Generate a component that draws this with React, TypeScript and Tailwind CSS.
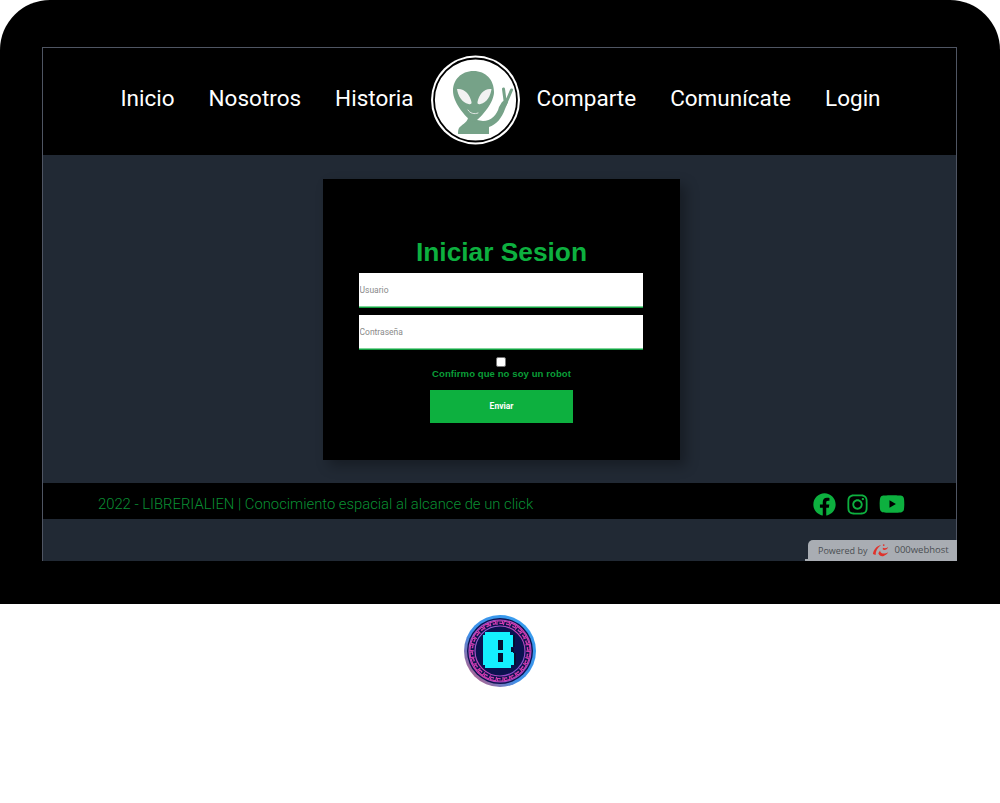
import { FaFacebook, FaInstagram, FaYoutube } from "react-icons/fa";

const navLeft = ["Inicio", "Nosotros", "Historia"];
const navRight = ["Comparte", "Comunícate", "Login"];
const keyAngles = Array.from({ length: 26 }, (_, i) => (i * 360) / 26);

const AlienLogo = () => (
  <svg viewBox="0 0 90 90" className="w-[90px] h-[90px] shrink-0">
    <circle cx="44.500" cy="45" r="44.500" fill="#fff" />
    <circle cx="44.500" cy="45" r="41.500" fill="#fff" stroke="#000" strokeWidth="1.800" />
    <path
      d="M37 63C36 68 30 70 28 73C27 75 27 77 27 79L58 79L58 72C65 70 71 63 74 54L77 47L75 44L71 47L68 52C66 60 60 66 52 66C50 66 48 65 46 65Z"
      fill="#76a288"
    />
    <path d="M74.500 49L72.500 34M74.500 49L80.500 35" stroke="#76a288" strokeWidth="3" strokeLinecap="round" />
    <path d="M42.500 16C55 16 63 25 63 37C63 47 52 60 46 65C44 67 41 67 39 65C33 60 22 47 22 36C22 25 30 16 42.500 16Z" fill="#76a288" />
    <path d="M26 34C33 33 39 39 40.500 47C40.800 49 39.500 49.500 37.500 49C31 47.500 27 41 26 34Z" fill="#f2f2f2" />
    <path d="M60.500 34C53.500 33 48 39 46.500 47C46.200 49 47.500 49.500 49.500 49C56 47.500 59.500 41 60.500 34Z" fill="#f2f2f2" />
    <path d="M37 55C39 58.500 43.500 59.500 47 58" fill="none" stroke="#ededed" strokeWidth="0.900" strokeLinecap="round" />
  </svg>
);

const WebhostMark = () => (
  <svg viewBox="0 0 20 16" className="w-[18px] h-[15px]">
    <path d="M1 12C2 7 5 3 10 2 6 5 4 9 4 13z" fill="#e0322b" />
    <path d="M7 11c1 3 4 4 6 3 2-.5 4-2 5-4-2 1-5 2-7 1-1-.5-2-1-2-3z" fill="#e0322b" />
    <path d="M12 5c2 1 4 .5 6-1-1 3-4 4-6 3z" fill="#e0322b" />
    <circle cx="13" cy="2" r="1" fill="#e0322b" />
  </svg>
);

const BadgeLogo = () => (
  <svg viewBox="0 0 72 72" className="w-[72px] h-[72px]">
    <defs>
      <linearGradient id="ring" x1="1" y1="0" x2="0" y2="1">
        <stop offset="0" stopColor="#35a0f0" />
        <stop offset="0.6" stopColor="#3f8fe8" />
        <stop offset="1" stopColor="#e0506a" />
      </linearGradient>
      <linearGradient id="keys" x1="0" y1="0" x2="1" y2="1">
        <stop offset="0" stopColor="#7c6be0" />
        <stop offset="0.5" stopColor="#d13db0" />
        <stop offset="1" stopColor="#6c55d8" />
      </linearGradient>
    </defs>
    <circle cx="36" cy="36" r="36" fill="url(#ring)" />
    <circle cx="36" cy="36" r="33" fill="#0b1250" />
    <circle cx="36" cy="36" r="31" fill="none" stroke="url(#keys)" strokeWidth="1.200" />
    <circle cx="36" cy="36" r="25" fill="none" stroke="url(#keys)" strokeWidth="1.200" />
    {keyAngles.map((a) => (
      <path
        key={a}
        d="M33 10V6H38.500V8.500H36V7.500"
        transform={`rotate(${a} 36 36)`}
        fill="none"
        stroke="#d13db0"
        strokeWidth="1.200"
      />
    ))}
    <path d="M21 17H46V20H49V32H47V35H49V38H50V50H47V53H21V50H19V20H21Z" fill="#14f0ff" />
    <path d="M49 20H51V32H49ZM47 33H50V37H47ZM50 38H52V50H50Z" fill="#061030" />
    <path d="M34 25H39V35H34ZM34 38H39V47H34Z" fill="#061030" />
  </svg>
);

export default function App() {
  return (
    <div className="w-[1000px] h-[803px] bg-white flex flex-col items-center overflow-hidden font-['Liberation_Sans',sans-serif]">
      <div className="w-full h-[604px] bg-black rounded-t-[50px] pt-[47px] px-[42px]">
        <div className="relative w-[915px] h-[514px] bg-[#212934] border-x border-t border-[#4f5563] flex flex-col">
          <header className="h-[107px] bg-black flex items-center justify-center pl-[2px] text-white text-[22.500px] font-['Roboto',sans-serif]">
            <nav className="flex items-center gap-[34px] mb-[5px]">
              {navLeft.map((item) => (
                <a key={item}>{item}</a>
              ))}
            </nav>
            <div className="ml-[17px] mr-[16px] mb-[3px]">
              <AlienLogo />
            </div>
            <nav className="flex items-center gap-[34px] mb-[5px]">
              {navRight.map((item) => (
                <a key={item}>{item}</a>
              ))}
            </nav>
          </header>

          <main className="h-[328px] pt-[24px] pl-[4px] flex justify-center">
            <div className="w-[357px] h-[281px] bg-black shadow-[6px_6px_12px_rgba(0,0,0,0.3)] flex flex-col items-center pt-[57px]">
              <h1 className="text-[26.300px] leading-[32px] font-bold text-[#0db03f]">Iniciar Sesion</h1>
              <input
                placeholder="Usuario"
                className="w-[284px] h-[34px] mt-[5px] mb-px mr-[2px] bg-white shadow-[inset_0_-1px_0_#7fd49a,0_1px_0_#12a040] pl-px text-[8.500px] font-['Roboto',sans-serif] outline-none placeholder:text-[#8a8a8a]"
              />
              <input
                placeholder="Contraseña"
                className="w-[284px] h-[34px] mt-[7px] mb-px mr-[2px] bg-white shadow-[inset_0_-1px_0_#7fd49a,0_1px_0_#12a040] pl-px text-[8.500px] font-['Roboto',sans-serif] outline-none placeholder:text-[#8a8a8a]"
              />
              <input type="checkbox" className="w-[10px] h-[10px] mt-[7px] mr-[1px] appearance-none bg-white border border-[#767676] rounded-[2px]" />
              <label className="mt-[1px] text-[9.500px] leading-[12px] font-bold tracking-[0.1px] text-[#0a9e38]">
                Confirmo que no soy un robot
              </label>
              <button className="w-[143px] h-[33px] mt-[10px] bg-[#0db03f] text-white text-[8.500px] font-bold font-['Roboto',sans-serif]">
                Enviar
              </button>
            </div>
          </main>

          <footer className="h-[36px] bg-black flex items-center justify-between pl-[55px] pr-[51px] pt-[6px]">
            <p className="text-[14.800px] text-[#0a8f33] font-['Roboto',sans-serif] font-light">
              2022 - LIBRERIALIEN | Conocimiento espacial al alcance de un click
            </p>
            <div className="flex items-center gap-[10px] text-[#0db03f]">
              <FaFacebook className="w-[23px] h-[23px]" />
              <FaInstagram className="w-[23px] h-[23px]" />
              <FaYoutube className="w-[26px] h-[26px]" />
            </div>
          </footer>

          <div className="absolute right-[-1px] bottom-0 w-[149px] h-[21px] bg-[#a9adb3] rounded-tl-[5px] flex items-center pl-[10px] text-[9px] text-[#4a4d52] font-['Open_Sans',sans-serif]">
            <span className="absolute -left-[3px] bottom-0 w-[3px] h-[2px] bg-[#a9adb3]" />
            <span>Powered by</span>
            <span className="ml-[5px] mr-[4px]">
              <WebhostMark />
            </span>
            <span className="text-[9.500px]">000webhost</span>
          </div>
        </div>
      </div>
      <div className="mt-[11px]">
        <BadgeLogo />
      </div>
    </div>
  );
}
